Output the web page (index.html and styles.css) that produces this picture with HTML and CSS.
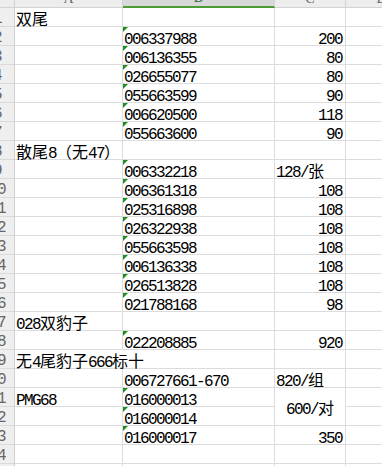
FILE: index.html
```html
<!DOCTYPE html>
<html lang="zh">
<head>
<meta charset="utf-8">
<title>Sheet</title>
<link rel="stylesheet" href="styles.css">
</head>
<body>
<div class="sheet">
  <div class="corner"></div>
  <div class="ch"><span>A</span></div>
  <div class="ch ch-sel"><span>B</span></div>
  <div class="ch"><span>C</span></div>
  <div class="ch"><span>D</span></div>

  <div class="rh"><span>1</span></div><div class="c"><span class="cjk">双尾</span></div><div class="c"></div><div class="c"></div><div class="c"></div>
  <div class="rh"><span>2</span></div><div class="c"></div><div class="c tri">006337988</div><div class="c num">200</div><div class="c"></div>
  <div class="rh"><span>3</span></div><div class="c"></div><div class="c tri">006136355</div><div class="c num">80</div><div class="c"></div>
  <div class="rh"><span>4</span></div><div class="c"></div><div class="c tri">026655077</div><div class="c num">80</div><div class="c"></div>
  <div class="rh"><span>5</span></div><div class="c"></div><div class="c tri">055663599</div><div class="c num">90</div><div class="c"></div>
  <div class="rh"><span>6</span></div><div class="c"></div><div class="c tri">006620500</div><div class="c num">118</div><div class="c"></div>
  <div class="rh"><span>7</span></div><div class="c"></div><div class="c tri">055663600</div><div class="c num">90</div><div class="c"></div>
  <div class="rh"><span>8</span></div><div class="c"><span class="cjk">散尾</span>8<span class="cjk">（无</span>47<span class="cjk">）</span></div><div class="c"></div><div class="c"></div><div class="c"></div>
  <div class="rh"><span>9</span></div><div class="c"></div><div class="c tri">006332218</div><div class="c">128/<span class="cjk">张</span></div><div class="c"></div>
  <div class="rh"><span>10</span></div><div class="c"></div><div class="c tri">006361318</div><div class="c num">108</div><div class="c"></div>
  <div class="rh"><span>11</span></div><div class="c"></div><div class="c tri">025316898</div><div class="c num">108</div><div class="c"></div>
  <div class="rh"><span>12</span></div><div class="c"></div><div class="c tri">026322938</div><div class="c num">108</div><div class="c"></div>
  <div class="rh"><span>13</span></div><div class="c"></div><div class="c tri">055663598</div><div class="c num">108</div><div class="c"></div>
  <div class="rh"><span>14</span></div><div class="c"></div><div class="c tri">006136338</div><div class="c num">108</div><div class="c"></div>
  <div class="rh"><span>15</span></div><div class="c"></div><div class="c tri">026513828</div><div class="c num">108</div><div class="c"></div>
  <div class="rh"><span>16</span></div><div class="c"></div><div class="c tri">021788168</div><div class="c num">98</div><div class="c"></div>
  <div class="rh"><span>17</span></div><div class="c">028<span class="cjk">双豹子</span></div><div class="c"></div><div class="c"></div><div class="c"></div>
  <div class="rh"><span>18</span></div><div class="c"></div><div class="c tri">022208885</div><div class="c num">920</div><div class="c"></div>
  <div class="rh"><span>19</span></div><div class="c spill"><span class="cjk">无</span>4<span class="cjk">尾豹子</span>666<span class="cjk">标十</span></div><div class="c"></div><div class="c"></div>
  <div class="rh"><span>20</span></div><div class="c"></div><div class="c">006727661-670</div><div class="c">820/<span class="cjk">组</span></div><div class="c"></div>
  <div class="rh"><span>21</span></div><div class="c">PMG68</div><div class="c tri">016000013</div><div class="c merge">600/<span class="cjk">对</span></div><div class="c"></div>
  <div class="rh"><span>22</span></div><div class="c"></div><div class="c tri">016000014</div><div class="c"></div>
  <div class="rh"><span>23</span></div><div class="c"></div><div class="c tri">016000017</div><div class="c num">350</div><div class="c"></div>
  <div class="rh"><span>24</span></div><div class="c"></div><div class="c"></div><div class="c"></div><div class="c"></div>
  <div class="rh"><span>25</span></div><div class="c"></div><div class="c"></div><div class="c"></div><div class="c"></div>
</div>
</body>
</html>
```

FILE: styles.css
```css
html, body {
  margin: 0;
  padding: 0;
  background: #ffffff;
  overflow: hidden;
}

.sheet {
  display: grid;
  grid-template-columns: 15px 108px 152px 71px 72px;
  grid-template-rows: 8px repeat(25, 19px);
  font-family: "Liberation Mono", "Noto Sans CJK SC", monospace;
  font-size: 16px;
  letter-spacing: -1.6px;
  color: #000;
}

.cjk {
  font-family: "Noto Sans CJK SC", sans-serif;
  letter-spacing: 0;
  line-height: 1px;
}

.corner {
  background: #ededed;
  border-right: 1px solid #d2d2d2;
  border-bottom: 1px solid #d2d2d2;
}

.ch {
  box-sizing: border-box;
  background: #ededed;
  border-right: 1px solid #d4d4d4;
  border-bottom: 1px solid #d2d2d2;
  overflow: hidden;
  display: flex;
  justify-content: center;
  align-items: flex-end;
  font-family: "Liberation Serif", serif;
  font-size: 14px;
  letter-spacing: 0;
  color: #666;
}

.ch span {
  line-height: 14px;
  margin-bottom: 1px;
}

.ch-sel {
  background: #d8d8d8;
  border-bottom: 2px solid #4b9b36;
  color: #2c6e3a;
}

.rh {
  box-sizing: border-box;
  background: #efefef;
  border-right: 1px solid #d0d0d0;
  border-bottom: 1px solid #dadada;
  overflow: hidden;
  display: flex;
  justify-content: flex-end;
  align-items: flex-end;
  padding-right: 2px;
  padding-bottom: 2px;
  color: #666;
}

.rh span {
  flex: none;
  width: 30px;
  text-align: center;
  line-height: 10px;
}

.c {
  box-sizing: border-box;
  position: relative;
  border-right: 1px solid #dcdcdc;
  border-bottom: 1px solid #dcdcdc;
  padding: 8px 0 0 1px;
  line-height: 10px;
  white-space: nowrap;
}

.num {
  text-align: right;
  padding-left: 0;
  padding-right: 3px;
}

.spill {
  grid-column: span 2;
}

.merge {
  grid-row: span 2;
  text-align: center;
  padding: 17px 0 0 0;
}

.tri::before {
  content: "";
  position: absolute;
  left: 0;
  top: 0;
  width: 5px;
  height: 5px;
  background: #1f8f1f;
  clip-path: polygon(0 0, 100% 0, 0 100%);
}
```
